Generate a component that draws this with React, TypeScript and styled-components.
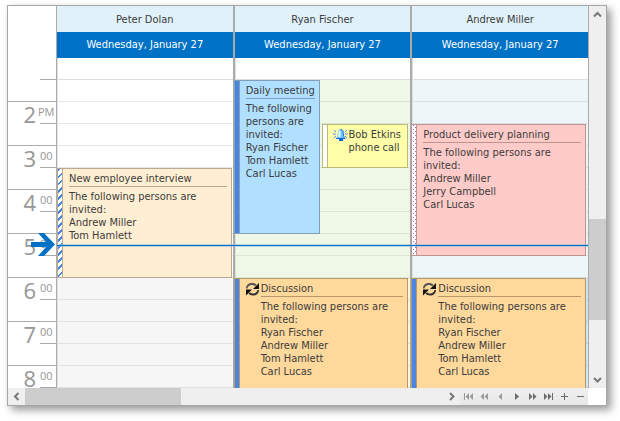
import React from "react";
import styled, { createGlobalStyle, css } from "styled-components";

const LINE = "#ababab";
const ACCENT = "#0072c6";
const FONT = '"DejaVu Sans Condensed", "Noto Sans", Tahoma, sans-serif';
const RULER_FONT = '"Open Sans", "Noto Sans", sans-serif';

const GlobalStyle = createGlobalStyle`
  *, *::before, *::after { box-sizing: border-box; }
  body { margin: 0; background: #fff; color: #3c3c3c; font: 11px/13px ${FONT}; }
  button { font: inherit; color: inherit; border: 0; padding: 0; margin: 0; background: none; }
`;

const Page = styled.main`
  padding: 5px 13px 15px 7px;
`;

const Scheduler = styled.section`
  border: 1px solid #a6a6a6;
  background: #fff;
  box-shadow: 4px 4px 8px rgba(0, 0, 0, 0.4);
`;

const Upper = styled.div`
  display: flex;
`;

const Ruler = styled.div`
  position: relative;
  width: 49px;
  flex: none;
  border-right: 1px solid ${LINE};
  padding-top: 52px;
`;

const RulerLead = styled.div`
  display: flex;
  flex-direction: column;
  height: 44px;
  border-bottom: 1px solid ${LINE};
`;

const HalfMark = styled.span`
  display: block;
  width: 16px;
  height: 22px;
  margin-left: auto;
  border-bottom: 1px solid ${LINE};
`;

const HourCell = styled.div<{ $last?: boolean }>`
  display: grid;
  grid-template-columns: 28px 16px;
  column-gap: 4px;
  height: ${(p) => (p.$last ? 22 : 44)}px;
  border-bottom: ${(p) => (p.$last ? "0" : `1px solid ${LINE}`)};
  color: #969696;
  font-family: ${RULER_FONT};
`;

const Hour = styled.span`
  height: 22px;
  text-align: right;
  font-size: 22px;
  line-height: 24px;
`;

const Minutes = styled.span<{ $wide?: boolean }>`
  height: 22px;
  width: 16px;
  line-height: 20px;
  border-bottom: 1px solid ${LINE};
  text-indent: ${(p) => (p.$wide ? -2 : 0)}px;
`;

const NowArrow = styled.svg`
  position: absolute;
  left: 22px;
  top: 227px;
`;

const Columns = styled.div`
  position: relative;
  display: flex;
  flex: 1;
  min-width: 0;
  overflow: hidden;
`;

const Column = styled.section`
  flex: 1 1 0;
  min-width: 0;
  & + & {
    border-left: 2px solid ${LINE};
  }
`;

const ResourceName = styled.h2`
  margin: 0;
  height: 26px;
  font: inherit;
  line-height: 27px;
  text-align: center;
  background: #e0f1fa;
`;

const DayName = styled.h3`
  margin: 0;
  height: 26px;
  font: inherit;
  line-height: 26px;
  text-align: center;
  color: #fff;
  background: ${ACCENT};
`;

const DayGrid = styled.div`
  display: grid;
  grid-template-rows: repeat(15, 22px);
  grid-template-columns: minmax(0, 1fr) minmax(0, 1fr);
`;

const Slot = styled.div<{ $row: number; $bg: string; $line: string }>`
  grid-row: ${(p) => p.$row};
  grid-column: 1 / -1;
  background: ${(p) => p.$bg};
  border-bottom: 1px solid ${(p) => p.$line};
  border-left: 1px solid ${(p) => p.$line};
`;

type StripKind = "busy" | "tentative" | "free" | "elsewhere";

const strips = {
  busy: css`
    background: #4a86e0;
  `,
  tentative: css`
    background: repeating-linear-gradient(135deg, #4a86e0 0 2px, #fff 2px 5px);
  `,
  free: css`
    background: #fff;
  `,
  elsewhere: css`
    background:
      conic-gradient(from 270deg at 1px 1px, #8a6cc0 90deg, transparent 0) 1px 0 / 4px 4px,
      conic-gradient(from 270deg at 1px 1px, #8a6cc0 90deg, transparent 0) 3px 2px / 4px 4px,
      #fff;
  `,
};

interface Span {
  $from: number;
  $to: number;
  $cols: string;
  $bg: string;
  $edge: string;
  $overlap?: boolean;
  $open?: boolean;
}

const EventCard = styled.article<Span>`
  display: flex;
  grid-row: ${(p) => p.$from} / ${(p) => p.$to};
  grid-column: ${(p) => p.$cols};
  margin: 0 ${(p) => (p.$cols === "1" ? 3 : p.$overlap ? 2 : 1)}px 0 ${(p) => (p.$overlap ? -1 : 0)}px;
  border: 1px solid ${(p) => p.$edge};
  ${(p) => p.$open && "border-bottom: 0;"}
  background: ${(p) => p.$bg};
  min-width: 0;
  z-index: 1;
`;

const Strip = styled.div<{ $kind: StripKind; $edge: string }>`
  flex: none;
  width: 5px;
  border-right: 1px solid ${(p) => p.$edge};
  ${(p) => strips[p.$kind]}
  background-clip: padding-box;
`;

const EventBody = styled.div<{ $icon?: boolean }>`
  display: flex;
  gap: 1px;
  flex: 1;
  min-width: 0;
  padding: 3px 4px 0 ${(p) => (p.$icon ? 5 : 6)}px;
`;

const EventText = styled.div`
  flex: 1;
  min-width: 0;
`;

const EventTitle = styled.h4<{ $edge?: string }>`
  margin: 0;
  font: inherit;
  ${(p) =>
    p.$edge &&
    css`
      padding-bottom: 1px;
      margin-bottom: 3px;
      border-bottom: 1px solid ${p.$edge};
      white-space: nowrap;
    `}
`;

const EventNote = styled.p`
  margin: 0;
`;

const EventIcon = styled.svg`
  flex: none;
  width: 15px;
  height: 14px;
`;

const NowLine = styled.div`
  position: absolute;
  left: 0;
  right: 0;
  top: 238px;
  height: 3px;
  z-index: 2;
  background: ${ACCENT};
  border: solid rgba(120, 180, 225, 0.5);
  border-width: 1px 0;
  background-clip: padding-box;
`;

const VScroll = styled.div`
  display: flex;
  flex-direction: column;
  flex: none;
  width: 18px;
  border-left: 1px solid ${LINE};
  background: #efefef;
`;

const Track = styled.div<{ $grow: number }>`
  flex: ${(p) => p.$grow} 1 0;
`;

const Thumb = styled(Track)`
  background: #cdcdcd;
`;

const ScrollButton = styled.button`
  display: flex;
  align-items: center;
  justify-content: center;
  flex: none;
  width: 17px;
  height: 17px;
`;

const Lower = styled.div`
  display: flex;
  height: 17px;
  padding-right: 18px;
`;

const HScroll = styled.div`
  display: flex;
  flex: 1;
  background: #efefef;
`;

const Navigator = styled.nav`
  display: flex;
  flex: none;
  background: linear-gradient(#efefef, #e8e8e8);
`;

const NavButton = styled.button<{ $dim?: boolean }>`
  display: flex;
  align-items: center;
  justify-content: center;
  width: 16px;
  height: 17px;
  color: ${(p) => (p.$dim ? "#9a9a9a" : "#6c6c6c")};
`;

const Chevron = ({ d }: { d: string }) => (
  <svg width="9" height="9" viewBox="0 0 9 9" fill="none" stroke="#777" strokeWidth="2">
    <path d={d} />
  </svg>
);

const RecurIcon = () => (
  <EventIcon viewBox="0 0 15 14">
    <path d="M1 6.500C1 3 3.500 1 7 1c2 0 3.500.7 4.500 1.700L10 4.300C9 3.400 8 3 6.800 3 4.500 3 3 4.300 2.500 6.500z" fill="#555" />
    <path d="M14 1v6H8z" fill="#111" />
    <path d="M14 8c0 3.500-2.500 5.500-6 5.500-2 0-3.500-.7-4.500-1.700L5 10.200c1 .9 2 1.300 3.200 1.300 2.300 0 3.800-1.300 4.300-3.500z" fill="#333" />
    <path d="M1 13.500v-6h6z" fill="#111" />
  </EventIcon>
);

const BellIcon = () => (
  <EventIcon viewBox="0 0 15 14">
    <path d="M7.500 1C5.500 1.500 4.800 3 4.700 5.500 4.600 8 4 9 3 10.500h9c-1-1.500-1.600-2.500-1.700-5C10.200 3 9.500 1.500 7.500 1z" fill="#6cc8ff" />
    <path d="M8 1.200c1.800.6 2.200 2 2.300 4.300.1 2.500.7 3.500 1.700 5H3" fill="none" stroke="#1268e8" />
    <path d="M6.500 3v6" stroke="#f0fbff" strokeWidth="2" />
    <path d="M6 11h4v2H6z" fill="#1560e0" />
    <path d="M0 6h3M1 2l2 2M1 10l2-2M15 6h-3M14 2l-2 2M14 10l-2-2" stroke="#4a90e8" />
  </EventIcon>
);

interface Appointment {
  title: string;
  note?: string[];
  kind: StripKind;
  from: number;
  to: number;
  cols?: string;
  bg: string;
  edge: string;
  icon?: "recur" | "bell";
  open?: boolean;
}

interface Resource {
  name: string;
  work: string;
  workFrom: number;
  workLine: string;
  lateBg: string;
  lateLine: string;
  appointments: Appointment[];
}

const INVITED = "The following persons are invited:";

const discussion: Appointment = {
  title: "Discussion",
  note: ["Ryan Fischer", "Andrew Miller", "Tom Hamlett", "Carl Lucas"],
  kind: "busy",
  from: 11,
  to: 16,
  bg: "#ffd89b",
  edge: "#b8986a",
  icon: "recur",
  open: true,
};

const resources: Resource[] = [
  {
    name: "Peter Dolan",
    work: "#ffffff",
    workFrom: 2,
    workLine: "#e6e6e6",
    lateBg: "#f6f6f6",
    lateLine: "#e2e2e2",
    appointments: [
      {
        title: "New employee interview",
        note: ["Andrew Miller", "Tom Hamlett"],
        kind: "tentative",
        from: 6,
        to: 11,
        bg: "#ffefd2",
        edge: "#b9ab93",
      },
    ],
  },
  {
    name: "Ryan Fischer",
    work: "#eff8e6",
    workFrom: 2,
    workLine: "#dce5d3",
    lateBg: "#eff8e6",
    lateLine: "#dce5d3",
    appointments: [
      {
        title: "Daily meeting",
        note: ["Ryan Fischer", "Tom Hamlett", "Carl Lucas"],
        kind: "busy",
        from: 2,
        to: 9,
        cols: "1",
        bg: "#b1dfff",
        edge: "#7f9fba",
      },
      {
        title: "Bob Etkins phone call",
        kind: "free",
        from: 4,
        to: 6,
        cols: "2",
        bg: "#ffffaa",
        edge: "#b9b97c",
        icon: "bell",
      },
      discussion,
    ],
  },
  {
    name: "Andrew Miller",
    work: "#ecf6f9",
    workFrom: 2,
    workLine: "#d8e2e6",
    lateBg: "#cfe4f5",
    lateLine: "#b9cfe2",
    appointments: [
      {
        title: "Product delivery planning",
        note: ["Andrew Miller", "Jerry Campbell", "Carl Lucas"],
        kind: "elsewhere",
        from: 4,
        to: 10,
        bg: "#ffcbc8",
        edge: "#bc9492",
      },
      discussion,
    ],
  },
];

const hours = [2, 3, 4, 5, 6, 7, 8];
const slotRows = Array.from({ length: 15 }, (_, i) => i + 1);

const navItems = [
  { label: "First", dim: true, d: "M1 1h1v7H1zM6 1v7L2.500 4.500zM10 1v7L6.500 4.500z" },
  { label: "Previous page", dim: true, d: "M5 1v7L1.500 4.500zM9 1v7L5.500 4.500z" },
  { label: "Previous", dim: true, d: "M7 1v7L3.500 4.500z" },
  { label: "Next", d: "M4 1v7L8 4.500z" },
  { label: "Next page", d: "M2 1v7L5.500 4.500zM6 1v7L9.500 4.500z" },
  { label: "Last", d: "M1 1v7L4.500 4.500zM5 1v7L8.500 4.500zM9 1h1v7H9z" },
  { label: "Append", d: "M5 1h1v3h3v1H6v3H5V5H2V4h3z" },
  { label: "Remove", d: "M2 4h7v1H2z" },
];

function AppointmentCard({ item, overlap }: { item: Appointment; overlap: boolean }) {
  return (
    <EventCard
      $from={item.from}
      $to={item.to}
      $cols={item.cols ?? "1 / -1"}
      $bg={item.bg}
      $edge={item.edge}
      $open={item.open}
      $overlap={overlap}
    >
      <Strip $kind={item.kind} $edge={item.edge} />
      <EventBody $icon={Boolean(item.icon)}>
        {item.icon === "recur" && <RecurIcon />}
        {item.icon === "bell" && <BellIcon />}
        <EventText>
          <EventTitle $edge={item.note ? item.edge : undefined}>{item.title}</EventTitle>
          {item.note && <EventNote>{INVITED}</EventNote>}
          {item.note?.map((person) => (
            <EventNote key={person}>{person}</EventNote>
          ))}
        </EventText>
      </EventBody>
    </EventCard>
  );
}

export default function App() {
  return (
    <Page>
      <GlobalStyle />
      <Scheduler>
        <Upper>
          <Ruler>
            <RulerLead>
              <HalfMark />
            </RulerLead>
            {hours.map((hour, i) => (
              <HourCell key={hour} $last={i === hours.length - 1}>
                <Hour>{hour}</Hour>
                <Minutes $wide={i === 0}>{i === 0 ? "PM" : "00"}</Minutes>
              </HourCell>
            ))}
            <NowArrow width="26" height="23" viewBox="0 0 26 23" fill={ACCENT}>
              <path d="M1 9h15L8 0h6l11 11.500L14 23H8l8-9H1z" />
            </NowArrow>
          </Ruler>
          <Columns>
            {resources.map((resource, index) => (
              <Column key={resource.name}>
                <ResourceName>{resource.name}</ResourceName>
                <DayName>Wednesday, January 27</DayName>
                <DayGrid>
                  {slotRows.map((row) => {
                    const late = row > 10;
                    const early = row < resource.workFrom;
                    return (
                      <Slot
                        key={row}
                        $row={row}
                        $bg={early ? "#fff" : late ? resource.lateBg : resource.work}
                        $line={early ? "#dedede" : late ? resource.lateLine : resource.workLine}
                      />
                    );
                  })}
                  {resource.appointments.map((item) => (
                    <AppointmentCard key={item.title} item={item} overlap={index > 0} />
                  ))}
                </DayGrid>
              </Column>
            ))}
            <NowLine />
          </Columns>
          <VScroll>
            <ScrollButton aria-label="Scroll up">
              <Chevron d="M1 6.500L4.500 3 8 6.500" />
            </ScrollButton>
            <Track $grow={196} />
            <Thumb $grow={101} />
            <Track $grow={51} />
            <ScrollButton aria-label="Scroll down">
              <Chevron d="M1 3L4.500 6.500 8 3" />
            </ScrollButton>
          </VScroll>
        </Upper>
        <Lower>
          <HScroll>
            <ScrollButton aria-label="Scroll left">
              <Chevron d="M6.500 1L3 4.500 6.500 8" />
            </ScrollButton>
            <Thumb $grow={155} />
            <Track $grow={261} />
            <ScrollButton aria-label="Scroll right">
              <Chevron d="M3 1L6.500 4.500 3 8" />
            </ScrollButton>
          </HScroll>
          <Navigator aria-label="Resource navigator">
            {navItems.map((item) => (
              <NavButton key={item.label} aria-label={item.label} $dim={item.dim}>
                <svg width="11" height="9" viewBox="0 0 11 9" fill="currentColor">
                  <path d={item.d} />
                </svg>
              </NavButton>
            ))}
          </Navigator>
        </Lower>
      </Scheduler>
    </Page>
  );
}
